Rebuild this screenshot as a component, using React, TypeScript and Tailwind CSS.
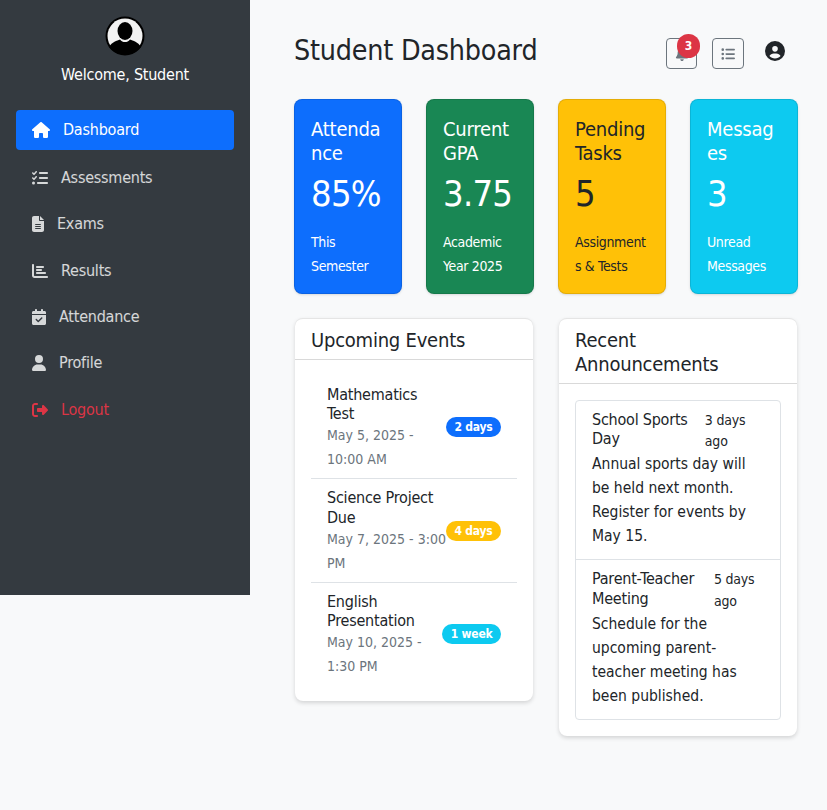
import { FaHouse, FaListCheck, FaFileLines, FaChartBar, FaCalendarCheck, FaUser, FaRightFromBracket, FaBell, FaListUl, FaCircleUser } from "react-icons/fa6";

const navItems = [
  { label: "Assessments", icon: FaListCheck, iconClass: "w-4 h-4" },
  { label: "Exams", icon: FaFileLines, iconClass: "w-3 h-4" },
  { label: "Results", icon: FaChartBar, iconClass: "w-4 h-4" },
  { label: "Attendance", icon: FaCalendarCheck, iconClass: "w-3.5 h-4" },
  { label: "Profile", icon: FaUser, iconClass: "w-3.5 h-4" },
];

const stats = [
  { title: "Attendance", value: "85%", note: "This Semester", color: "bg-[#0d6efd] text-white" },
  { title: "Current GPA", value: "3.75", note: "Academic Year 2025", color: "bg-[#198754] text-white" },
  { title: "Pending Tasks", value: "5", note: "Assignments & Tests", color: "bg-[#ffc107] text-[#212529]" },
  { title: "Messages", value: "3", note: "Unread Messages", color: "bg-[#0dcaf0] text-white" },
];

const events = [
  { title: "Mathematics Test", date: "May 5, 2025 - 10:00 AM", badge: "2 days", color: "bg-[#0d6efd]" },
  { title: "Science Project Due", date: "May 7, 2025 - 3:00 PM", badge: "4 days", color: "bg-[#ffc107]" },
  { title: "English Presentation", date: "May 10, 2025 - 1:30 PM", badge: "1 week", color: "bg-[#0dcaf0]" },
];

const announcements = [
  { title: "School Sports Day", when: "3 days ago", text: "Annual sports day will be held next month. Register for events by May 15.", titleClass: "leading-[19.2px]", whenClass: "leading-[21px]" },
  { title: "Parent-Teacher Meeting", when: "5 days ago", text: "Schedule for the upcoming parent-teacher meeting has been published.", titleClass: "leading-[19.7px]", whenClass: "leading-[21.5px]" },
];

const Avatar = () => (
  <svg viewBox="0 0 40 40" className="w-10 h-10">
    <circle cx="20" cy="20" r="19.5" fill="#000" />
    <circle cx="20" cy="20" r="17.5" fill="#f2f2f2" />
    <ellipse cx="20" cy="15" rx="7.5" ry="9" fill="#000" />
    <path d="M4 31c3-5 8-6.500 11-7.500 1.500 2 3 2.500 5 2.500s3.500-.5 5-2.500c3 1 8 2.500 11 7.500-3.500 4.500-9.500 7.500-16 7.500S7.500 35.500 4 31z" fill="#000" />
  </svg>
);

export default function App() {
  return (
    <div className="flex items-start min-h-screen bg-[#f8f9fa] text-[#212529] tracking-[-0.014em] font-['DejaVu_Sans_Condensed','DejaVu_Sans',sans-serif]">
      <aside className="w-[250px] h-[595px] shrink-0 bg-[#343a40] text-white px-4 pt-4">
        <div className="flex flex-col items-center mb-[23px]">
          <Avatar />
          <p className="mt-[7px] leading-6">Welcome, Student</p>
        </div>
        <nav className="flex flex-col gap-[6.4px]">
          <a className="flex items-center gap-[13px] h-10 px-4 mb-[1.5px] rounded bg-[#0d6efd] text-white">
            <FaHouse className="w-[18px] h-4" />
            Dashboard
          </a>
          {navItems.map((item) => (
            <a key={item.label} className="flex items-center gap-[13px] h-10 px-4 text-white/80">
              <item.icon className={item.iconClass} />
              {item.label}
            </a>
          ))}
          <a className="flex items-center gap-[13px] h-10 px-4 text-[#dc3545]">
            <FaRightFromBracket className="w-4 h-4" />
            Logout
          </a>
        </nav>
      </aside>

      <main className="flex-1 min-w-0 pl-[44px] pr-[29px] pt-[30px]">
        <div className="flex items-start justify-between h-[39px] mb-[30px]">
          <h1 className="text-[28.4px] leading-[41px] font-normal">Student Dashboard</h1>
          <div className="flex items-start mr-[13px]">
            <button className="relative mt-2 w-[31px] h-[31px] flex items-center justify-center border border-[#6c757d] rounded text-[#6c757d]">
              <FaBell className="w-3.5 h-3.5" />
              <span className="absolute -top-[5px] left-[10px] w-[23px] h-[24px] rounded-full bg-[#dc3545] text-white text-xs font-bold flex items-center justify-center">3</span>
            </button>
            <button className="mt-2 ml-[15px] w-8 h-[31px] flex items-center justify-center border border-[#6c757d] rounded text-[#6c757d]">
              <FaListUl className="w-3.5 h-3.5" />
            </button>
            <FaCircleUser className="mt-[11px] ml-[21px] w-5 h-5 text-[#212529]" />
          </div>
        </div>

        <div className="grid grid-cols-4 gap-6 mb-6">
          {stats.map((s) => (
            <div key={s.title} className={`h-[195px] rounded-lg border border-black/10 px-4 pt-[17px] shadow-sm break-words ${s.color}`}>
              <h5 className="text-xl leading-6 mb-[7px]">{s.title}</h5>
              <p className="text-[36px] leading-[43px] mb-[15px] tracking-[-0.02em]">{s.value}</p>
              <p className="text-sm leading-6 tracking-[-0.025em]">{s.note}</p>
            </div>
          ))}
        </div>

        <div className="grid grid-cols-2 gap-[26px] items-start px-px">
          <section className="bg-white rounded-lg shadow-[0_2px_4px_rgba(0,0,0,0.15)] border-t border-black/10">
            <h5 className="text-xl leading-6 px-4 pt-[9px] pb-[7px] border-b border-black/15">Upcoming Events</h5>
            <ul className="p-4">
              {events.map((e, i) => (
                <li key={e.title} className={`flex items-center justify-between px-4 pt-[9px] pb-[7px] ${i < 2 ? "border-b border-[#dee2e6]" : ""}`}>
                  <div className="min-w-0">
                    <h6 className="text-base leading-[19.2px]">{e.title}</h6>
                    <p className="text-sm leading-6 tracking-normal text-[#6c757d]">{e.date}</p>
                  </div>
                  <span className={`shrink-0 -translate-y-px rounded-full px-[8.5px] py-[3px] text-xs leading-[14px] font-bold text-white ${e.color}`}>{e.badge}</span>
                </li>
              ))}
            </ul>
          </section>

          <section className="bg-white rounded-lg shadow-[0_2px_4px_rgba(0,0,0,0.15)] border-t border-black/10">
            <h5 className="text-xl leading-6 px-4 pt-[9px] pb-[7px] border-b border-black/15">Recent Announcements</h5>
            <div className="p-4">
              <ul className="border border-[#dee2e6] rounded">
                {announcements.map((a, i) => (
                  <li key={a.title} className={`px-4 pt-[9px] pb-[11px] ${i === 0 ? "border-b border-[#dee2e6]" : ""}`}>
                    <div className="flex justify-between">
                      <h6 className={`text-base ${a.titleClass}`}>{a.title}</h6>
                      <small className={`text-sm ${a.whenClass}`}>{a.when}</small>
                    </div>
                    <p className="text-[15.5px] leading-6 tracking-normal">{a.text}</p>
                  </li>
                ))}
              </ul>
            </div>
          </section>
        </div>
      </main>
    </div>
  );
}
